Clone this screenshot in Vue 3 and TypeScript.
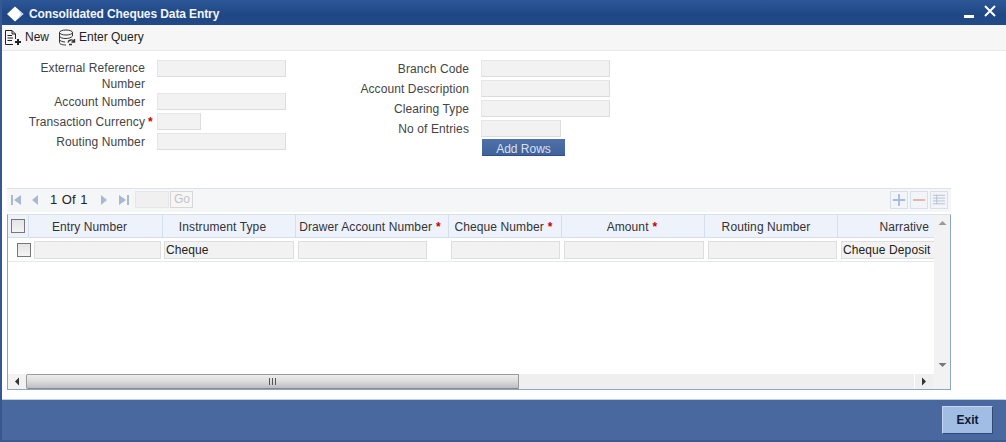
<script setup lang="ts">
interface Field { label: string; width: number; required?: boolean; tall?: boolean }
const left: Field[] = [
  { label: 'External Reference Number', width: 129, tall: true },
  { label: 'Account Number', width: 129 },
  { label: 'Transaction Currency', width: 44, required: true },
  { label: 'Routing Number', width: 129 },
]
const right: Field[] = [
  { label: 'Branch Code', width: 129 },
  { label: 'Account Description', width: 129 },
  { label: 'Clearing Type', width: 129 },
  { label: 'No of Entries', width: 80 },
]
const columns = [
  { label: 'Entry Number', w: 134, pr: 12 },
  { label: 'Instrument Type', w: 133, pr: 13 },
  { label: 'Drawer Account Number', w: 153, req: true, pr: 4 },
  { label: 'Cheque Number', w: 113, req: true, pr: 3 },
  { label: 'Amount', w: 143, req: true, pr: 2 },
  { label: 'Routing Number', w: 133, pr: 10 },
  { label: 'Narrative', w: 96, pr: 5, right: true },
]
const cells = [
  { v: '', w: 127, ml: 0 }, { v: 'Cheque', w: 130, ml: 3 }, { v: '', w: 129, ml: 4 }, { v: '', w: 109, ml: 24 },
  { v: '', w: 140, ml: 4 }, { v: '', w: 129, ml: 4 }, { v: 'Cheque Deposit', w: 100, ml: 4 },
]
</script>

<template>
  <div class="win">
    <header class="title">
      <svg class="logo" width="18" height="16" viewBox="0 0 18 16">
        <path d="M9 0.5 L17.5 8 L9 15.5 L1 8 Z" fill="#fff" />
        <path d="M12 3.5 L17.5 8 L12 12.5 L15 8 Z" fill="#b9cbe6" />
      </svg>
      <span class="title-text">Consolidated Cheques Data Entry</span>
      <span class="win-btns">
        <svg width="11" height="4" viewBox="0 0 11 4"><rect x="0" y="0" width="10" height="3" fill="#fff" /></svg>
        <svg width="14" height="14" viewBox="0 0 14 14"><path d="M2 2 L12 12 M12 2 L2 12" stroke="#fff" stroke-width="2" /></svg>
      </span>
    </header>

    <nav class="tools">
      <span class="tool new">
        <svg width="18" height="17" viewBox="0 0 18 17" fill="none" stroke="#222" stroke-width="1">
          <path d="M1.5 15.5 V1.5 H8 L11.5 5 V10 M8 1.5 V5 H11.5" />
          <path d="M1.5 15.5 H9 M3.5 6.5 H8 M3.5 9 H9 M3.5 11.5 H8" />
          <path d="M14 10 V16 M11 13 H17" stroke-width="2" />
        </svg>
        New
      </span>
      <span class="tool query">
        <svg width="18" height="17" viewBox="0 0 18 17" fill="none" stroke="#333" stroke-width="1">
          <ellipse cx="8" cy="3.5" rx="6.5" ry="2.5" />
          <path d="M1.5 3.5 V13.5 C1.5 15 4 16 8 16 M14.5 3.5 V7 M1.5 7 C2 9 5 9.5 8 9.5 C10 9.5 13 9 14.5 7 M1.5 10.5 C2 12 4 12.8 7 13" />
          <path d="M10 13.5 C10.5 10.5 14.5 10 16 12.5 M16.5 10 V13 H13.5 M11 15.5 H14" stroke-width="1.4" />
        </svg>
        Enter Query
      </span>
    </nav>

    <main class="body">
      <section class="form">
        <div class="col col-left">
          <div v-for="f in left" :key="f.label" class="field" :class="{ tall: f.tall }">
            <label>{{ f.label }}</label>
            <span class="star"><template v-if="f.required">*</template></span>
            <span class="input" :style="{ width: f.width + 'px' }"></span>
          </div>
        </div>
        <div class="col col-right">
          <div v-for="f in right" :key="f.label" class="field">
            <label>{{ f.label }}</label>
            <span class="star"></span>
            <span class="input" :style="{ width: f.width + 'px' }"></span>
          </div>
          <button class="add" type="button">Add Rows</button>
        </div>
      </section>

      <section class="grid-wrap">
        <div class="pager">
          <svg class="p-ic" width="12" height="12" viewBox="0 0 12 12"><path d="M1 1 H3 V11 H1 Z M11 1 V11 L4 6 Z" fill="#a9b9cf" /></svg>
          <svg class="p-ic second" width="8" height="12" viewBox="0 0 8 12"><path d="M7 1 V11 L1 6 Z" fill="#a9b9cf" /></svg>
          <span class="page-text">1 Of 1</span>
          <svg class="p-ic third" width="8" height="12" viewBox="0 0 8 12"><path d="M1 1 V11 L7 6 Z" fill="#a9b9cf" /></svg>
          <svg class="p-ic fourth" width="12" height="12" viewBox="0 0 12 12"><path d="M1 1 V11 L8 6 Z M9 1 H11 V11 H9 Z" fill="#a9b9cf" /></svg>
          <span class="page-input"></span>
          <span class="go">Go</span>
          <span class="pager-actions">
            <span class="pa">
              <svg width="16" height="16" viewBox="0 0 17 17"><path d="M8.5 2 V15 M2 8.5 H15" stroke="#a9bbd8" stroke-width="2" /></svg>
            </span>
            <span class="pa">
              <svg width="16" height="16" viewBox="0 0 17 17"><path d="M2 8.5 H15" stroke="#e3b0b0" stroke-width="2" /></svg>
            </span>
            <span class="pa">
              <svg width="16" height="16" viewBox="0 0 17 17" stroke="#b4c0d4" stroke-width="1">
                <path d="M2 3.5 H15 M2 6.5 H15 M2 9.5 H15 M2 12.5 H15 M6 3 V13" />
              </svg>
            </span>
          </span>
        </div>

        <div class="table">
          <div class="table-main">
            <div class="viewport">
              <div class="thead">
                <div class="th th-check"><span class="check"></span></div>
                <div
                  v-for="c in columns"
                  :key="c.label"
                  class="th"
                  :class="{ 'th-right': c.right }"
                  :style="{ width: c.w + 'px', paddingRight: c.pr + 'px' }"
                >
                  <span>{{ c.label }}</span><span v-if="c.req" class="star-h">*</span>
                </div>
              </div>
              <div class="trow">
                <div class="td-check"><span class="check"></span></div>
                <span
                  v-for="(c, i) in cells"
                  :key="i"
                  class="cell"
                  :style="{ width: c.w + 'px', marginLeft: c.ml + 'px' }"
                >{{ c.v }}</span>
              </div>
            </div>
            <div class="vbar">
              <svg width="9" height="6" viewBox="0 0 9 6"><path d="M0.5 5 L4.5 1 L8.5 5 Z" fill="#999" /></svg>
              <svg width="9" height="6" viewBox="0 0 9 6"><path d="M0.5 1 L4.5 5 L8.5 1 Z" fill="#777" /></svg>
            </div>
          </div>
          <div class="hbar">
            <span class="arrow">
              <svg width="6" height="9" viewBox="0 0 6 9"><path d="M5 0.5 L1 4.5 L5 8.5 Z" fill="#333" /></svg>
            </span>
            <div class="thumb"><span class="grip"></span></div>
            <div class="rest"></div>
            <span class="arrow end">
              <svg width="6" height="9" viewBox="0 0 6 9"><path d="M1 0.5 L5 4.5 L1 8.5 Z" fill="#333" /></svg>
            </span>
            <span class="corner"></span>
          </div>
        </div>
      </section>
    </main>

    <footer class="foot">
      <button class="exit" type="button">Exit</button>
    </footer>
  </div>
</template>

<style>
html, body { margin: 0; background: #fff; }
</style>

<style scoped>
.win {
  width: 1006px;
  height: 442px;
  box-sizing: border-box;
  display: flex;
  flex-direction: column;
  background: #48689f;
  font-family: "Liberation Sans", Arial, sans-serif;
  font-size: 12px;
  letter-spacing: 0.1px;
  color: #333;
  border-left: 2px solid #36578f;
  border-bottom: 2px solid #3a5a90;
  overflow: hidden;
}
.title {
  height: 25px;
  flex: none;
  display: flex;
  align-items: center;
  padding: 2px 9px 0 4px;
  box-sizing: border-box;
  background: linear-gradient(#2c5797, #1f4785 60%, #234a88);
  color: #fff;
}
.title-text { margin-left: 5px; font-weight: bold; font-size: 12px; letter-spacing: -0.1px; color: #f2f5fa; }
.win-btns { margin-left: auto; display: flex; align-items: center; gap: 8px; }
.win-btns svg:first-child { margin-top: 6px; }
.win-btns svg:last-child { margin-top: -6px; }
.tools {
  height: 26px;
  flex: none;
  box-sizing: border-box;
  display: flex;
  align-items: center;
  padding: 0 0 1px 2px;
  background: #f6f6f6;
  border-bottom: 1px solid #e8e8e8;
  color: #222;
  font-size: 12px;
  letter-spacing: 0;
}
.tool { display: inline-flex; align-items: center; }
.new svg { margin-right: 3px; }
.query { margin-left: 9px; }
.query svg { margin-right: 3px; }
.body {
  flex: 1;
  background: #fff;
  display: flex;
  flex-direction: column;
  border-bottom: 1px solid #c3d0e0;
  border-right: 1px solid #fff;
  min-height: 0;
}
.form { display: flex; height: 137px; box-sizing: border-box; padding-top: 9px; flex: none; }
.col { display: flex; flex-direction: column; }
.col-left { width: 285px; margin-right: 39px; }
.col-right { width: 300px; }
.field { display: grid; grid-template-columns: 143px 12px auto; min-height: 17px; margin-bottom: 3px; align-items: start; line-height: 16px; }
.field label { text-align: right; color: #444; padding-top: 1px; }
.field.tall { height: 30px; margin-bottom: 3px; }
.field.tall label { padding-left: 30px; padding-top: 0; height: 30px; }
.star { color: #c00; font-size: 12px; text-align: left; padding: 1px 0 0 3px; font-weight: bold; }
.input {
  height: 17px;
  box-sizing: border-box;
  display: block;
  background: #f2f2f2;
  border: 1px solid #e6e6e6;
  border-bottom-color: #dcdcdc;
  border-right-color: #dcdcdc;
}
.add {
  margin: -1px 0 0 156px;
  width: 83px;
  height: 17px;
  padding: 3px 0 0;
  background: linear-gradient(#4f70a8, #3f639d);
  border: 0;
  border-bottom: 1px solid #31507f;
  color: #d9e2ef;
  font: 12px "Liberation Sans", Arial, sans-serif;
}
.grid-wrap { margin: 0 0 0 5px; width: 944px; flex: 1; display: flex; flex-direction: column; padding-bottom: 9px; min-height: 0; }
.pager {
  height: 24px;
  box-sizing: border-box;
  flex: none;
  display: flex;
  align-items: center;
  background: #f5f6f8;
  border-top: 1px solid #dce2ea;
  padding: 0 0 2px 3px;
  margin-bottom: 2px;
  letter-spacing: 0;
}
.p-ic { flex: none; }
.second { margin-left: 9px; }
.page-text { margin-left: 11px; font-size: 13px; color: #222; word-spacing: 1px; }
.third { margin-left: 13px; }
.fourth { margin-left: 10px; }
.page-input { width: 32px; height: 15px; margin-left: 5px; background: #f0f0f0; border: 1px solid #e6e6e6; }
.go { width: 21px; height: 15px; margin-left: 1px; border: 1px solid #d8d8d8; color: #c4c4c4; text-align: center; line-height: 15px; background: #f6f6f6; }
.pager-actions { margin-left: auto; display: flex; gap: 2px; margin-right: 3px; }
.pa { width: 18px; height: 18px; border: 1px solid #d9dfe8; display: flex; align-items: center; justify-content: center; background: #f2f4f8; box-sizing: border-box; }
.table { flex: 1; box-sizing: border-box; border: 1px solid #8da7c3; border-top: 1px solid #dce2ea; display: flex; flex-direction: column; min-height: 0; }
.table-main { flex: 1; display: flex; min-height: 0; }
.viewport { width: 926px; overflow: hidden; flex: none; }
.thead { display: flex; height: 23px; background: #eef2fb; border-bottom: 1px solid #d4deec; box-sizing: border-box; width: 1000px; }
.th { flex: none; box-sizing: border-box; border-right: 1px solid #d4deec; text-align: center; line-height: 25px; color: #333; white-space: nowrap; }
.th-right { text-align: right; border-right: 0; }
.th-check { width: 21px; display: flex; align-items: center; justify-content: center; }
.star-h { color: #c00; margin-left: 4px; font-weight: bold; }
.check { display: block; width: 12px; height: 12px; background: linear-gradient(#e4e4e4, #f4f4f4); border: 1px solid #777; box-sizing: content-box; }
.trow { display: flex; height: 24px; align-items: center; border-bottom: 1px solid #e3e8f0; width: 1000px; box-sizing: border-box; }
.td-check { width: 26px; flex: none; padding-left: 9px; box-sizing: border-box; }
.cell { flex: none; height: 18px; box-sizing: border-box; background: #f2f2f2; border: 1px solid #dedede; line-height: 16px; padding-left: 1px; color: #222; white-space: nowrap; overflow: hidden; }
.vbar { flex: 1; background: #f2f2f2; display: flex; flex-direction: column; justify-content: space-between; align-items: center; padding: 5px 0 6px; box-sizing: border-box; }
.hbar { height: 15px; flex: none; display: flex; align-items: stretch; background: #efefef; }
.arrow { width: 18px; flex: none; display: flex; align-items: center; justify-content: center; background: #f2f2f2; }
.arrow.end { width: 18px; background: #fff0; border-left: 1px solid #fff; margin-left: 0; }
.thumb { width: 493px; flex: none; box-sizing: border-box; border: 1px solid #9a9a9a; border-bottom-color: #888; border-radius: 2px 0 0 2px; background: linear-gradient(#ececec, #dedede 45%, #bdbdc2); position: relative; display: flex; align-items: center; justify-content: center; }
.grip { width: 7px; height: 7px; background: repeating-linear-gradient(90deg, #555 0 1px, transparent 1px 3px); }
.rest { flex: 1; background: #efefef; }
.corner { width: 17px; flex: none; background: #f2f2f2; }
.foot { height: 40px; flex: none; display: flex; justify-content: flex-end; align-items: center; padding-right: 13px; background: #48689f; box-sizing: border-box; }
.exit { width: 51px; height: 28px; background: #a2bde3; border: 1px solid; border-color: #c5d6ee #2f4a75 #2f4a75 #c5d6ee; color: #0c1a33; font: bold 12px "Liberation Sans", Arial, sans-serif; }
</style>
